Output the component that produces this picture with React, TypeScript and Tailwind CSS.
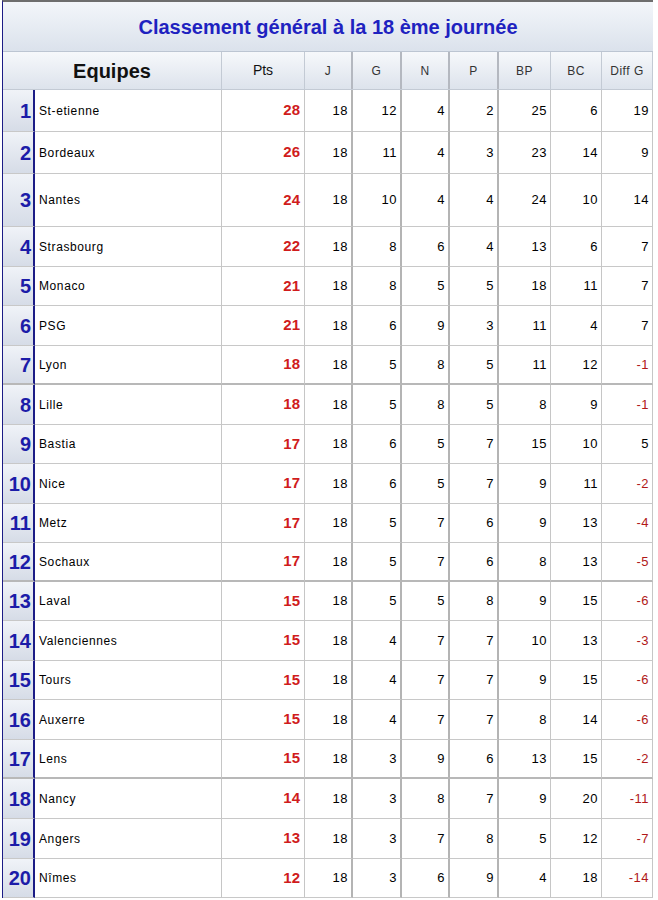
const font = { fontFamily: '"Liberation Sans", Arial, sans-serif' };

type Row = [string, number, number, number, number, number, number, number, number];

const rows: Row[] = [
  ['St-etienne', 28, 18, 12, 4, 2, 25, 6, 19],
  ['Bordeaux', 26, 18, 11, 4, 3, 23, 14, 9],
  ['Nantes', 24, 18, 10, 4, 4, 24, 10, 14],
  ['Strasbourg', 22, 18, 8, 6, 4, 13, 6, 7],
  ['Monaco', 21, 18, 8, 5, 5, 18, 11, 7],
  ['PSG', 21, 18, 6, 9, 3, 11, 4, 7],
  ['Lyon', 18, 18, 5, 8, 5, 11, 12, -1],
  ['Lille', 18, 18, 5, 8, 5, 8, 9, -1],
  ['Bastia', 17, 18, 6, 5, 7, 15, 10, 5],
  ['Nice', 17, 18, 6, 5, 7, 9, 11, -2],
  ['Metz', 17, 18, 5, 7, 6, 9, 13, -4],
  ['Sochaux', 17, 18, 5, 7, 6, 8, 13, -5],
  ['Laval', 15, 18, 5, 5, 8, 9, 15, -6],
  ['Valenciennes', 15, 18, 4, 7, 7, 10, 13, -3],
  ['Tours', 15, 18, 4, 7, 7, 9, 15, -6],
  ['Auxerre', 15, 18, 4, 7, 7, 8, 14, -6],
  ['Lens', 15, 18, 3, 9, 6, 13, 15, -2],
  ['Nancy', 14, 18, 3, 8, 7, 9, 20, -11],
  ['Angers', 13, 18, 3, 7, 8, 5, 12, -7],
  ['Nîmes', 12, 18, 3, 6, 9, 4, 18, -14],
];

// row heights measured from the screenshot (bottom border included)
const heights = [
  'h-[42px]', 'h-[42px]', 'h-[53px]', 'h-[40px]', 'h-[39px]', 'h-[40px]', 'h-[39px]',
  'h-[40px]', 'h-[39px]', 'h-[40px]', 'h-[39px]', 'h-[39px]', 'h-[39px]', 'h-[40px]',
  'h-[39px]', 'h-[40px]', 'h-[39px]', 'h-[40px]', 'h-[40px]', 'h-[39px]',
];

const grid = 'grid grid-cols-[32px_187px_83px_48px_49px_48px_49px_52px_51px_51px]';

// right border per column: J..P have a heavier line
const colRight = [
  'border-r-2 border-r-[#1c1c86]',
  'border-r border-r-[#c6c6c6]',
  'border-r border-r-[#c6c6c6]',
  'border-r-2 border-r-[#b4b4b4]',
  'border-r-2 border-r-[#b4b4b4]',
  'border-r-2 border-r-[#b4b4b4]',
  'border-r-2 border-r-[#b4b4b4]',
  'border-r border-r-[#c6c6c6]',
  'border-r border-r-[#c6c6c6]',
  'border-r border-r-[#c6c6c6]',
];

const headRight = [
  'border-r border-r-[#c3cad4]',
  'border-r border-r-[#c3cad4]',
  'border-r-2 border-r-[#b4b8c0]',
  'border-r-2 border-r-[#b4b8c0]',
  'border-r-2 border-r-[#b4b8c0]',
  'border-r-2 border-r-[#b4b8c0]',
  'border-r border-r-[#c3cad4]',
  'border-r border-r-[#c3cad4]',
  'border-r border-r-[#c3cad4]',
];

function HeaderRow() {
  const labels = ['Pts', 'J', 'G', 'N', 'P', 'BP', 'BC', 'Diff G'];
  return (
    <div className={`${grid} h-[38px] border-b border-b-[#c3cad4] bg-gradient-to-b from-[#f6f8fb] to-[#dde3ec]`}>
      <div className={`col-span-2 flex items-center justify-center text-[20px] font-bold text-[#111] ${headRight[0]}`}>
        Equipes
      </div>
      {labels.map((l, i) => (
        <div
          key={l}
          className={`flex items-center justify-center ${headRight[i + 1]} ${
            i === 0 ? 'text-[14px] text-[#111]' : 'text-[12px] tracking-[0.5px] text-[#333]'
          }`}
        >
          {l}
        </div>
      ))}
    </div>
  );
}

function TeamRow({ row, rank }: { row: Row; rank: number }) {
  const [team, pts, ...rest] = row;
  const heavy = rank === 7 || rank === 12 || rank === 17;
  const bottom = heavy ? 'border-b-2 border-b-[#b8b8b8]' : 'border-b border-b-[#c8c8c8]';
  const h = heights[rank - 1];
  return (
    <div className={`${grid} ${h}`}>
      <div
        className={`flex items-center justify-end pr-[2px] bg-gradient-to-b from-[#f0f3f8] to-[#d6dce7] text-[20px] font-bold text-[#1c1ca8] ${colRight[0]} ${bottom}`}
      >
        {rank}
      </div>
      <div className={`flex items-center pl-[4px] text-[12px] tracking-[0.6px] text-black ${colRight[1]} ${bottom}`}>
        {team}
      </div>
      <div className={`flex items-center justify-end pr-[4px] text-[15px] font-bold text-[#d01c1c] ${colRight[2]} ${bottom}`}>
        {pts}
      </div>
      {rest.map((v, i) => {
        const diff = i === rest.length - 1;
        const neg = diff && v < 0;
        return (
          <div
            key={i}
            className={`flex items-center justify-end pr-[3px] text-[13px] tracking-[0.5px] ${
              neg ? 'text-[#b01818]' : 'text-black'
            } ${colRight[i + 3]} ${bottom}`}
          >
            {v}
          </div>
        );
      })}
    </div>
  );
}

export default function App() {
  return (
    <div className="min-h-screen bg-white" style={font}>
      <div className="ml-[2px] w-[651px] border-l border-l-[#1c1c86] border-t-2 border-t-[#6e6e6e]">
        <div className="flex h-[50px] items-center justify-center border-b border-b-[#bcc5d2] bg-gradient-to-b from-[#f3f6fa] to-[#dbe2ec] text-[20px] font-bold text-[#1e22c0]">
          Classement général à la 18 ème journée
        </div>
        <HeaderRow />
        {rows.map((r, i) => (
          <TeamRow key={r[0]} row={r} rank={i + 1} />
        ))}
      </div>
    </div>
  );
}
